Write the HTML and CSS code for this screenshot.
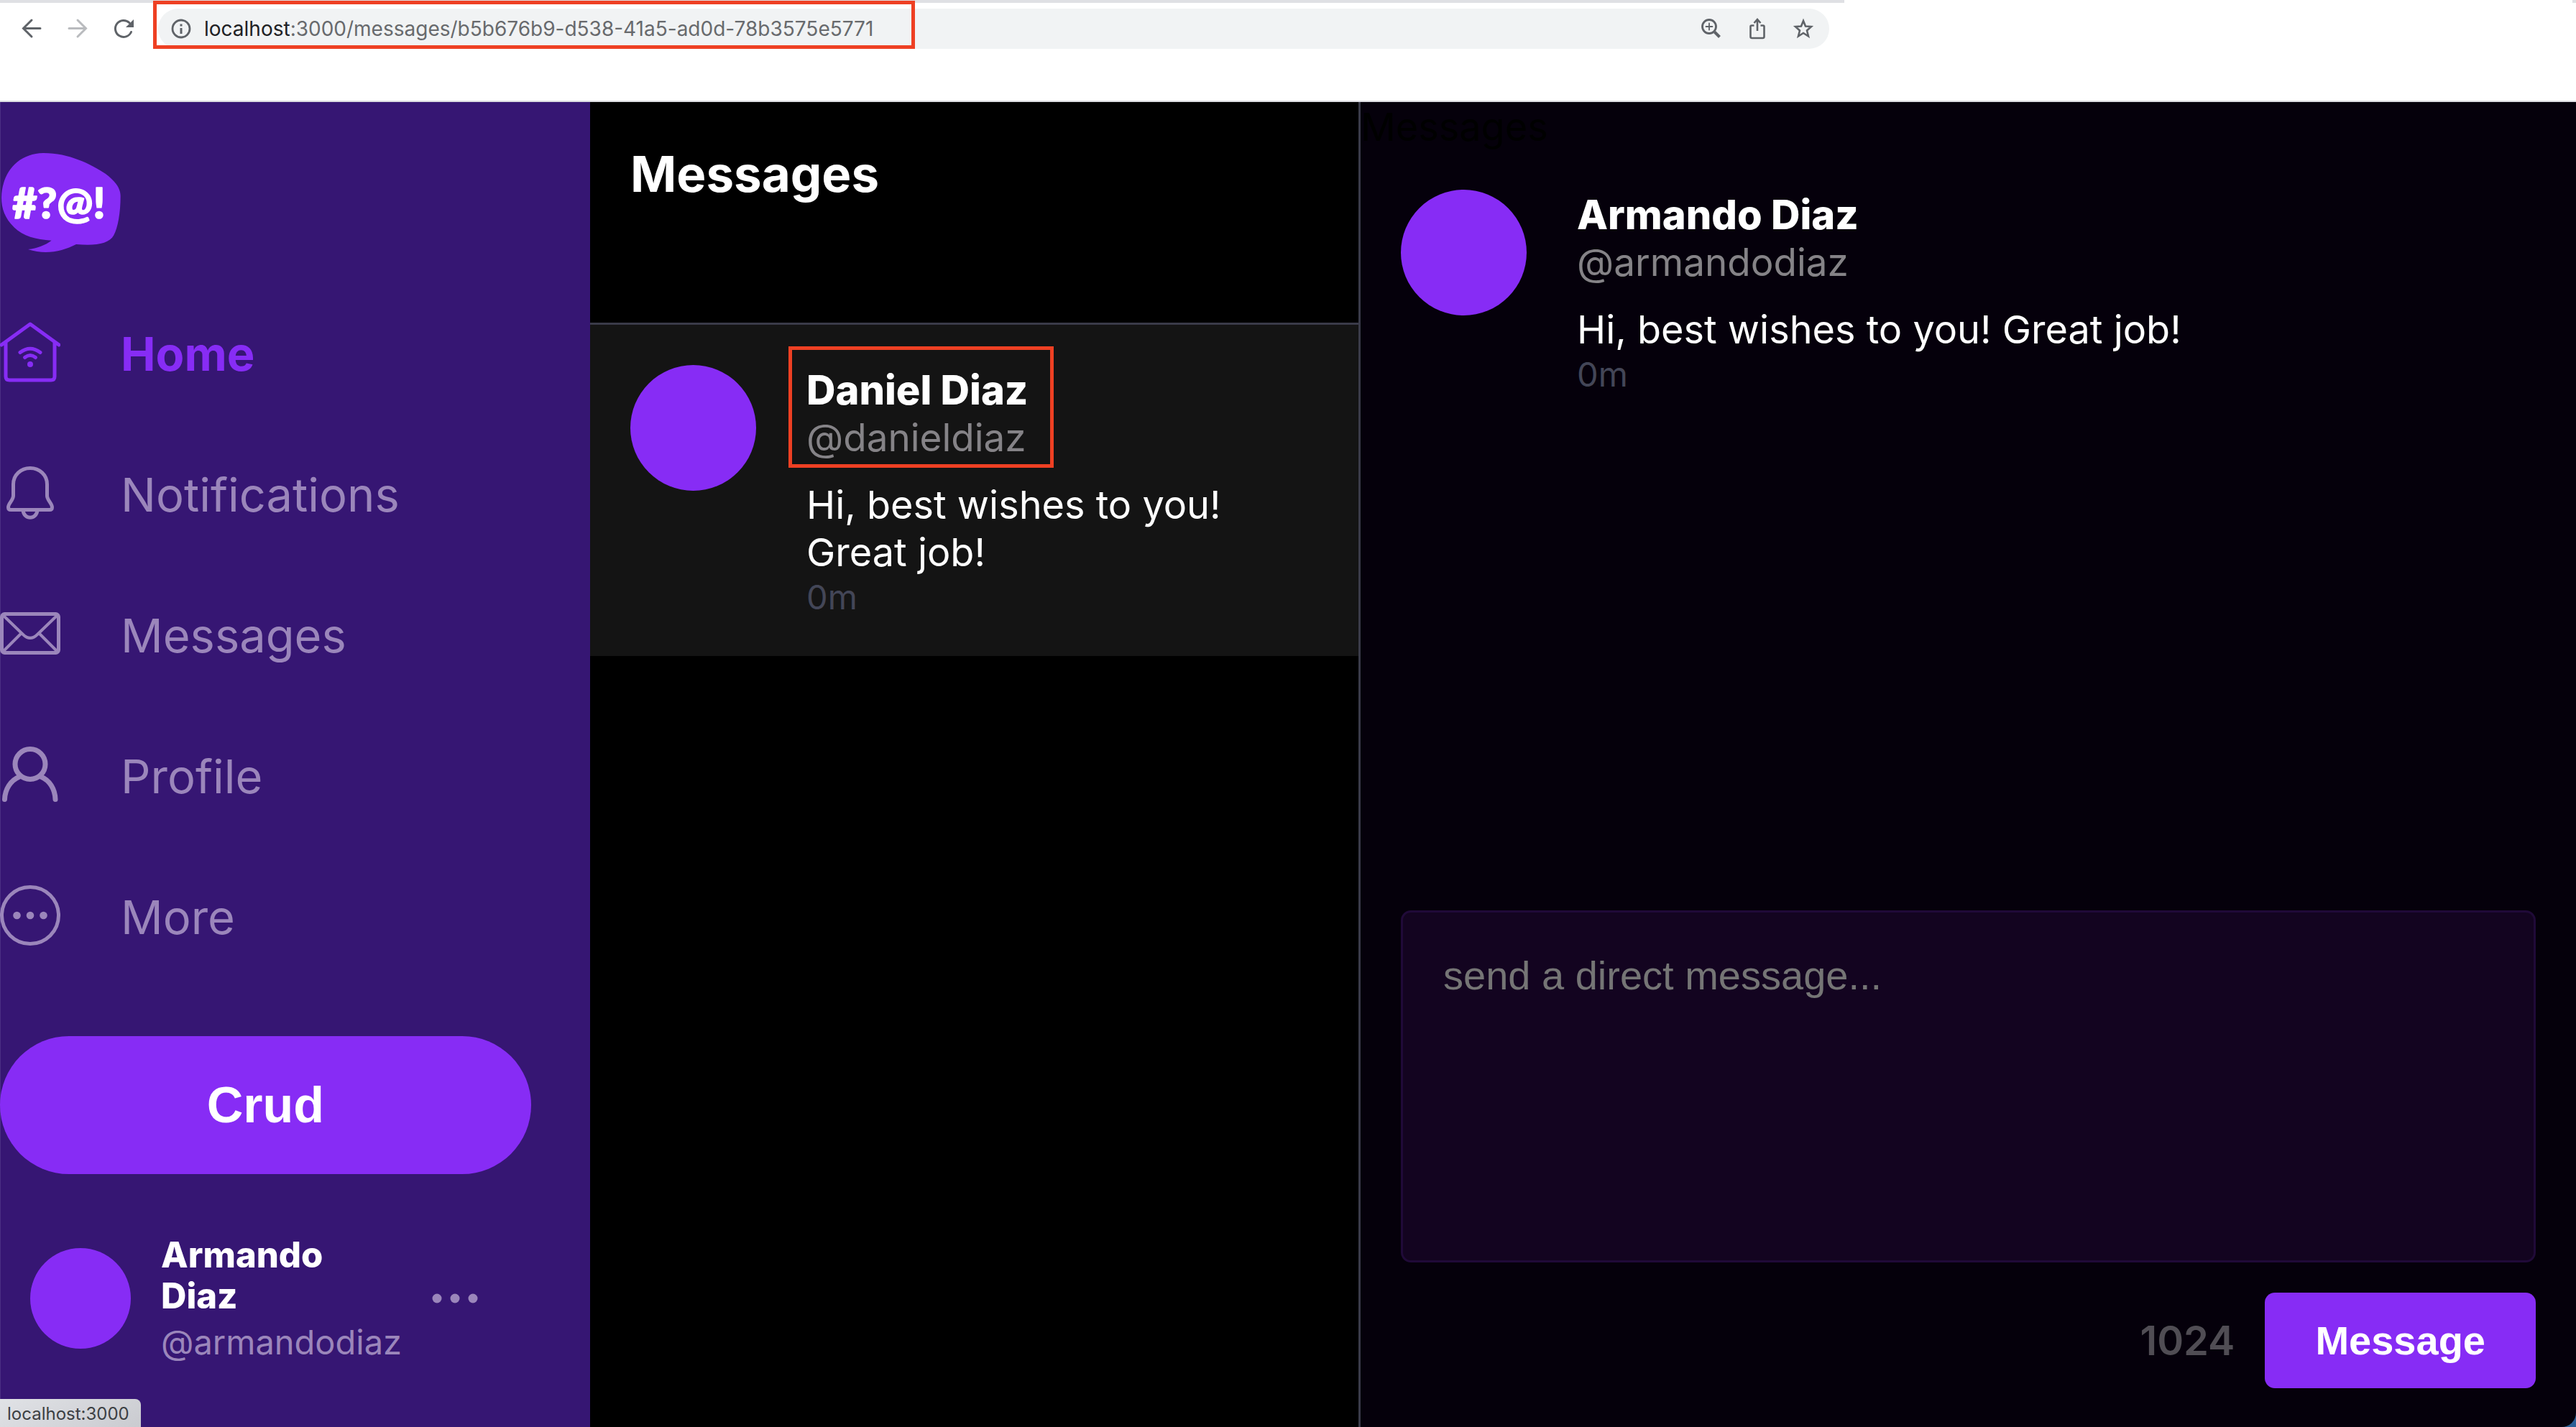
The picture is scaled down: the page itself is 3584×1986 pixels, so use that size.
FILE: index.html
```html
<!DOCTYPE html>
<html lang="en">
<head>
<meta charset="utf-8">
<title>Messages</title>
<link rel="stylesheet" href="styles.css">
</head>
<body>
<div class="window">
  <header class="browser">
    <div class="tabstrip"><span class="tabstrip-main"></span><span class="tabstrip-end"></span></div>
    <div class="toolbar">
      <button class="tool" type="button" aria-label="Back">
        <svg viewBox="0 0 32 32"><path d="M28 15.500H5M16 4L4.500 15.500L16 27" stroke-width="3"/></svg>
      </button>
      <button class="tool tool-off" type="button" aria-label="Forward">
        <svg viewBox="0 0 32 32"><path d="M4 15.500H27M16 4L27.500 15.500L16 27" stroke-width="3"/></svg>
      </button>
      <button class="tool" type="button" aria-label="Reload">
        <svg viewBox="0 0 32 32"><path d="M26.500 20.500A11.500 11.500 0 1 1 24 7.700" stroke-width="3"/><path class="solid" d="M30 3V14H19Z"/></svg>
      </button>
      <div class="omnibox">
        <svg class="tool-icon" viewBox="0 0 32 32"><circle cx="16" cy="16" r="12" stroke-width="2.800"/><path d="M16 15V23" stroke-width="3" stroke-linecap="butt"/><path d="M16 9.500V12.500" stroke-width="3" stroke-linecap="butt"/></svg>
        <div class="url" role="textbox" aria-label="Address"><span class="host">localhost</span>:3000/messages/b5b676b9-d538-41a5-ad0d-78b3575e5771</div>
        <button class="tool" type="button" aria-label="Zoom">
          <svg viewBox="0 0 32 32"><circle cx="13" cy="13" r="9.500" stroke-width="2.800"/><path d="M13 8.500V17.500M8.500 13H17.500" stroke-width="1.800"/><path d="M20.500 20.500L27.500 27.500" stroke-width="4" stroke-linecap="butt"/></svg>
        </button>
        <button class="tool" type="button" aria-label="Share">
          <svg viewBox="0 0 32 32"><path d="M11.500 11.500H8Q6.500 11.500 6.500 13V27Q6.500 29 8.500 29H23.500Q25.500 29 25.500 27V13Q25.500 11.500 24 11.500H20.500M16 19V3.500M11.500 8L16 3L20.500 8" stroke-width="2.600" stroke-linecap="butt"/></svg>
        </button>
        <button class="tool" type="button" aria-label="Bookmark">
          <svg viewBox="0 0 32 32"><path d="M16 5L19 12.500L27 13L21 18.500L23 26.500L16 22L9 26.500L11 18.500L5 13L13 12.500Z" stroke-width="2.600" stroke-linejoin="miter"/></svg>
        </button>
        <span class="mark mark-url"></span>
      </div>
    </div>
  </header>

  <div class="app">
    <aside class="sidebar">
      <a class="logo" href="#" aria-label="Cruddur">
        <svg viewBox="0 -6 504 504"><path fill="#872cf5" d="M180 39C285 38 380 85 440 125C480 155 503 185 503 218C503 290 492 350 475 382C455 420 395 427 318 420C260 450 190 465 117 441C155 437 190 423 215 404C150 400 95 385 60 350C20 312 6 270 6 225C8 120 75 41 180 39Z"/><text class="logo-text" x="52" y="312">#?@!</text></svg>
      </a>
      <nav class="nav">
        <a class="nav-link nav-active" href="#">
          <svg viewBox="0 0 84 84"><path d="M2 32L42 3L82 32M8 28V76Q8 81 13 81H71Q76 81 76 76V28"/><path d="M28 42.500Q42 32 56 42.500M34.500 49.500Q42 43.500 49.500 49.500"/><circle class="dot" cx="42" cy="59" r="4"/></svg>
          <span class="nav-label">Home</span>
        </a>
        <a class="nav-link" href="#">
          <svg viewBox="0 0 84 84"><path d="M42 7.500C29 7.500 18.500 17 18.500 30V46C18.500 52 11.500 57 11.500 62Q11.500 65.500 15 65.500H69Q72.500 65.500 72.500 62C72.500 57 65.500 52 65.500 46V30C65.500 17 55 7.500 42 7.500ZM32 66C33 79.500 51 79.500 52 66"/></svg>
          <span class="nav-label">Notifications</span>
        </a>
        <a class="nav-link" href="#">
          <svg viewBox="0 0 84 84"><rect x="2.500" y="14.500" width="79" height="54" rx="4"/><path d="M5 17L32 43Q42 53 52 43L79 17M4 67L29 42M80 67L55 42" stroke-width="4"/></svg>
          <span class="nav-label">Messages</span>
        </a>
        <a class="nav-link" href="#">
          <svg viewBox="0 0 84 84"><circle cx="42" cy="27.500" r="21" stroke-width="7"/><path d="M6.500 76.500C7 62 15 50 27 45M77 76.500C76.500 62 69 50 57 45" stroke-width="7"/></svg>
          <span class="nav-label">Profile</span>
        </a>
        <a class="nav-link" href="#">
          <svg viewBox="0 0 84 84"><circle cx="42" cy="42" r="39.500"/><circle class="dot" cx="23.500" cy="42" r="5.300"/><circle class="dot" cx="42" cy="42" r="5.300"/><circle class="dot" cx="60.500" cy="42" r="5.300"/></svg>
          <span class="nav-label">More</span>
        </a>
      </nav>
      <button class="crud" type="button">Crud</button>
      <div class="account">
        <span class="avatar avatar-small"></span>
        <div class="account-text">
          <div class="account-name">Armando Diaz</div>
          <div class="account-handle">@armandodiaz</div>
        </div>
        <button class="account-menu" type="button" aria-label="Account menu">
          <svg viewBox="0 0 64 64"><circle cx="7" cy="32" r="6.500"/><circle cx="32" cy="32" r="6.500"/><circle cx="57" cy="32" r="6.500"/></svg>
        </button>
      </div>
    </aside>

    <section class="groups">
      <h1 class="groups-title">Messages</h1>
      <a class="message message-selected" href="#">
        <span class="avatar"></span>
        <div class="message-text">
          <div class="identity">
            <div class="name">Daniel Diaz</div>
            <div class="handle">@danieldiaz</div>
            <span class="mark mark-identity"></span>
          </div>
          <p class="body">Hi, best wishes to you! Great job!</p>
          <time class="ago">0m</time>
        </div>
      </a>
    </section>

    <main class="thread">
      <div class="thread-title">Messages</div>
      <article class="message">
        <span class="avatar"></span>
        <div class="message-text">
          <div class="identity">
            <div class="name">Armando Diaz</div>
            <div class="handle">@armandodiaz</div>
          </div>
          <p class="body">Hi, best wishes to you! Great job!</p>
          <time class="ago">0m</time>
        </div>
      </article>
      <form class="composer">
        <textarea class="composer-input" aria-label="Direct message" placeholder="send a direct message..."></textarea>
        <div class="composer-bar">
          <span class="count">1024</span>
          <button class="send" type="button">Message</button>
        </div>
      </form>
    </main>
  </div>
  <div class="status">localhost:3000</div>
</div>
</body>
</html>
```

FILE: styles.css
```css
* {
  box-sizing: border-box;
}

body {
  margin: 0;
  background: #2b5f95;
  font-family: Inter, "Liberation Sans", sans-serif;
  font-size: 54px;
  line-height: 66px;
}

a {
  color: inherit;
  text-decoration: none;
}

button {
  border: 0;
  padding: 0;
  background: none;
  cursor: pointer;
}

.window {
  display: flex;
  flex-direction: column;
  min-height: 100vh;
}

/* browser chrome */

.browser {
  height: 142px;
  background: #fff;
  border-bottom: 2px solid #dcdde2;
}

.tabstrip {
  display: flex;
  justify-content: space-between;
  height: 4px;
}

.tabstrip-main {
  width: 71.6%;
  background: #dfe0e4;
}

.tabstrip-end {
  width: 5px;
  background: #dfe0e4;
}

.toolbar {
  display: flex;
  align-items: center;
  gap: 32px;
  width: 71%;
  padding: 8px 0 0 28px;
}

.tool,
.tool-icon {
  flex: none;
  width: 32px;
  height: 32px;
}

.tool svg {
  display: block;
}

.toolbar svg {
  fill: none;
  stroke: #5f6368;
  stroke-linecap: round;
}

.toolbar .tool-off svg {
  stroke: #b9bbbe;
}

.toolbar .solid {
  fill: #5f6368;
  stroke: none;
}

.omnibox {
  position: relative;
  flex: 1;
  display: flex;
  align-items: center;
  gap: 32px;
  height: 56px;
  padding: 0 20px 0 16px;
  border-radius: 28px;
  background: #f1f3f4;
}

.url {
  flex: 1;
  margin-left: -16px;
  font-size: 28px;
  line-height: 34px;
  color: #686a6d;
}

.host {
  color: #202124;
}

.mark {
  position: absolute;
  border: 5px solid #ee4023;
}

.mark-url {
  left: -7px;
  top: -11px;
  width: 1060px;
  height: 67px;
}

.mark-identity {
  left: -25px;
  top: -28px;
  width: 369px;
  height: 169px;
}

/* app */

.app {
  flex: 1;
  display: grid;
  grid-template-columns: 821fr 1072fr 1691fr;
  border-bottom-right-radius: 20px;
  overflow: hidden;
}

.sidebar {
  padding-top: 56px;
  background: #361673;
  box-shadow: inset 1px 0 #4b2f84;
}

.logo,
.logo svg {
  display: block;
  width: 168px;
  height: 168px;
}

.logo-text {
  font-family: Lato, sans-serif;
  font-size: 178px;
  font-weight: 900;
  fill: #fff;
  stroke: #fff;
  stroke-width: 5px;
  stroke-linejoin: round;
}

.nav {
  display: flex;
  flex-direction: column;
  gap: 112px;
  padding: 82px 0 126px;
}

.nav-link {
  display: flex;
  align-items: center;
  gap: 84px;
  font-size: 65px;
  line-height: 78px;
  color: #9b86bb;
}

.nav-label {
  padding-top: 6px;
}

.nav-link svg {
  width: 84px;
  height: 84px;
  fill: none;
  stroke: currentColor;
  stroke-width: 5px;
  stroke-linecap: round;
  stroke-linejoin: round;
}

.nav-link [stroke-width="4"] {
  stroke-width: 4px;
}

.nav-link [stroke-width="7"] {
  stroke-width: 7px;
}

.nav-link .dot {
  fill: currentColor;
  stroke: none;
}

.nav-active {
  font-weight: 700;
  color: #872cf5;
}

.crud {
  display: block;
  width: 90%;
  height: 192px;
  border-radius: 96px;
  background: #872cf5;
  font: bold 70px/80px "Liberation Sans", sans-serif;
  color: #fff;
}

.account {
  display: flex;
  align-items: center;
  gap: 42px;
  margin-top: 42px;
  padding: 42px;
}

.avatar {
  flex: none;
  width: 175px;
  height: 175px;
  border-radius: 50%;
  background: #872cf5;
}

.avatar-small {
  width: 140px;
  height: 140px;
}

.account-text {
  font-size: 47px;
  line-height: 57px;
}

.account-name {
  max-width: 300px;
  margin-bottom: 7px;
  font-size: 49px;
  font-weight: 800;
  color: #fff;
}

.account-handle {
  color: #9b86bb;
}

.account-menu,
.account-menu svg {
  display: block;
  width: 64px;
  height: 64px;
  fill: #9b86bb;
}

/* conversation list */

.groups {
  border-right: 3px solid #3a3b49;
  background: #000;
}

.groups-title {
  height: 310px;
  margin: 0;
  padding: 58px 56px;
  border-bottom: 3px solid #3a3b49;
  font-size: 69px;
  line-height: 84px;
  font-weight: 700;
  color: #fff;
}

.message {
  display: flex;
  align-items: flex-start;
  gap: 70px;
  padding: 56px;
  color: #fff;
}

.message-selected {
  padding-bottom: 54px;
  background: #141414;
}

.message-text {
  padding-top: 2px;
}

.identity {
  position: relative;
  margin-bottom: 28px;
}

.name {
  font-size: 56px;
  font-weight: 800;
}

.handle {
  font-size: 53px;
  color: #858387;
}

.body {
  margin: 0;
}

.ago {
  display: block;
  font-size: 47px;
  line-height: 57px;
  color: #434657;
}

/* open conversation */

.thread {
  display: flex;
  flex-direction: column;
  background: #05000b;
}

.thread-title {
  padding-top: 4px;
  line-height: 62px;
  color: #000;
}

.composer {
  display: flex;
  flex-direction: column;
  gap: 42px;
  margin-top: auto;
  padding: 0 56px 54px;
}

.composer-input {
  display: block;
  width: 100%;
  height: 490px;
  padding: 56px;
  border: 3px solid #200a38;
  border-radius: 14px;
  background: #130420;
  font: 56px/64px "Liberation Sans", sans-serif;
  color: #fff;
  resize: none;
}

.composer-input::placeholder {
  color: #757575;
}

.composer-bar {
  display: flex;
  justify-content: flex-end;
  align-items: center;
  gap: 42px;
}

.count {
  font-size: 56px;
  font-weight: 600;
  color: #504d54;
}

.send {
  height: 133px;
  padding: 0 70px;
  border-radius: 14px;
  background: #872cf5;
  font: bold 56px/64px "Liberation Sans", sans-serif;
  color: #fff;
}

.status {
  position: fixed;
  left: 0;
  bottom: 0;
  padding: 5px 16px 2px 10px;
  border-top-right-radius: 8px;
  background: linear-gradient(150deg, #e0e2e6, #cacbd0);
  font-size: 24px;
  line-height: 32px;
  color: #3c4043;
}
```
